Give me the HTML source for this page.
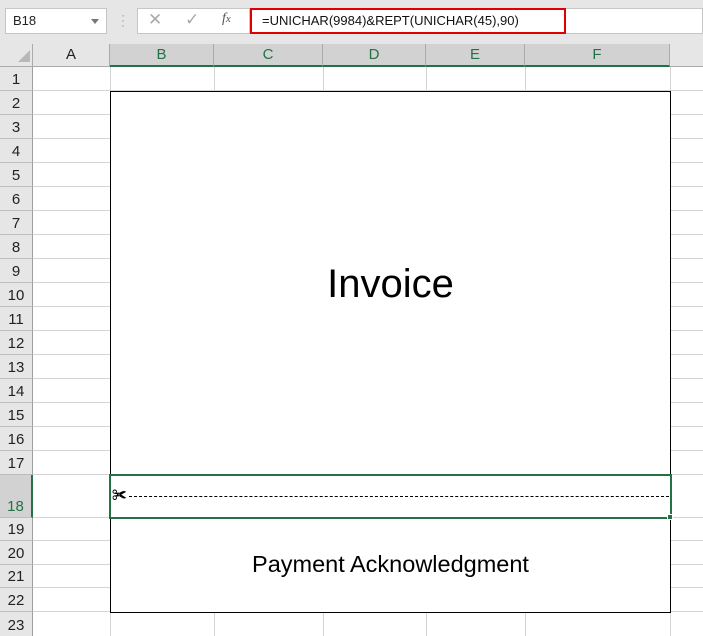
<!DOCTYPE html>
<html><head><meta charset="utf-8"><style>
*{margin:0;padding:0;box-sizing:border-box}
body{width:703px;height:636px;overflow:hidden;background:#fff;font-family:"Liberation Sans",sans-serif;position:relative}
.a{position:absolute}
.rh{position:absolute;left:0;width:33px;background:#e6e6e6;border-bottom:1px solid #bdbdbd;border-right:1px solid #9f9f9f;font-size:15px;color:#222;text-align:center;display:flex;align-items:flex-end;justify-content:center;padding-bottom:2px}
.ch{position:absolute;top:44px;height:23px;background:#d2d2d2;border-right:1px solid #ababab;font-size:15px;color:#217346;text-align:center;line-height:22px;border-bottom:2px solid #217346}
.hl{position:absolute;left:33px;right:0;height:1px;background:#d4d4d4}
.vl{position:absolute;top:67px;bottom:0;width:1px;background:#d4d4d4}
</style></head><body>
<div class="a" style="left:0;top:0;width:703px;height:44px;background:#e6e6e6"></div>
<div class="a" style="left:5px;top:8px;width:102px;height:26px;background:#fff;border:1px solid #c6c6c6;font-size:13px;line-height:24px;padding-left:7px;color:#222">B18</div>
<div class="a" style="left:91px;top:19px;width:0;height:0;border-left:4px solid transparent;border-right:4px solid transparent;border-top:5px solid #777"></div>
<div class="a" style="left:121px;top:13px;color:#999;font-size:12px;line-height:5px">·<br>·<br>·</div>
<div class="a" style="left:137px;top:8px;width:113px;height:26px;background:#fff;border:1px solid #c6c6c6"></div>
<div class="a" style="left:148px;top:10px;color:#aaa;font-size:17px">✕</div>
<div class="a" style="left:185px;top:10px;color:#aaa;font-size:17px">✓</div>
<div class="a" style="left:222px;top:11px;color:#555;font-size:14px;font-style:italic;font-family:'Liberation Serif',serif">f<span style="font-size:11px">x</span></div>
<div class="a" style="left:250px;top:8px;width:453px;height:26px;background:#fff;border:1px solid #c6c6c6"></div>
<div class="a" style="left:250px;top:8px;width:316px;height:26px;border:2px solid #e00000;font-size:13px;line-height:22px;padding-left:10px;color:#111">=UNICHAR(9984)&amp;REPT(UNICHAR(45),90)</div>
<div class="a" style="left:0;top:44px;width:33px;height:23px;background:#e6e6e6;border-right:1px solid #ababab;border-bottom:1px solid #ababab"></div>
<div class="a" style="left:18px;top:50px;width:0;height:0;border-left:12px solid transparent;border-bottom:12px solid #b8b8b8"></div>
<div class="a" style="left:33px;top:44px;width:77px;height:23px;background:#e6e6e6;border-right:1px solid #ababab;border-bottom:1px solid #ababab;font-size:15px;text-align:center;line-height:22px;color:#222">A</div>
<div class="ch" style="left:110px;width:104px">B</div>
<div class="ch" style="left:214px;width:109px">C</div>
<div class="ch" style="left:323px;width:103px">D</div>
<div class="ch" style="left:426px;width:99px">E</div>
<div class="ch" style="left:525px;width:145px">F</div>
<div class="a" style="left:670px;top:44px;width:33px;height:23px;background:#e6e6e6;border-bottom:1px solid #ababab"></div>
<div class="vl" style="left:110px"></div><div class="vl" style="left:214px"></div><div class="vl" style="left:323px"></div><div class="vl" style="left:426px"></div><div class="vl" style="left:525px"></div><div class="vl" style="left:670px"></div>
<div class="hl" style="top:90px"></div><div class="hl" style="top:114px"></div><div class="hl" style="top:138px"></div><div class="hl" style="top:162px"></div><div class="hl" style="top:186px"></div><div class="hl" style="top:210px"></div><div class="hl" style="top:234px"></div><div class="hl" style="top:258px"></div><div class="hl" style="top:282px"></div><div class="hl" style="top:306px"></div><div class="hl" style="top:330px"></div><div class="hl" style="top:354px"></div><div class="hl" style="top:378px"></div><div class="hl" style="top:402px"></div><div class="hl" style="top:426px"></div><div class="hl" style="top:450px"></div><div class="hl" style="top:474px"></div><div class="hl" style="top:517px"></div><div class="hl" style="top:540px"></div><div class="hl" style="top:564px"></div><div class="hl" style="top:587px"></div><div class="hl" style="top:611px"></div>
<div class="rh" style="top:67px;height:24px">1</div>
<div class="rh" style="top:91px;height:24px">2</div>
<div class="rh" style="top:115px;height:24px">3</div>
<div class="rh" style="top:139px;height:24px">4</div>
<div class="rh" style="top:163px;height:24px">5</div>
<div class="rh" style="top:187px;height:24px">6</div>
<div class="rh" style="top:211px;height:24px">7</div>
<div class="rh" style="top:235px;height:24px">8</div>
<div class="rh" style="top:259px;height:24px">9</div>
<div class="rh" style="top:283px;height:24px">10</div>
<div class="rh" style="top:307px;height:24px">11</div>
<div class="rh" style="top:331px;height:24px">12</div>
<div class="rh" style="top:355px;height:24px">13</div>
<div class="rh" style="top:379px;height:24px">14</div>
<div class="rh" style="top:403px;height:24px">15</div>
<div class="rh" style="top:427px;height:24px">16</div>
<div class="rh" style="top:451px;height:24px">17</div>
<div class="rh" style="top:475px;height:43px;background:#d2d2d2;color:#217346;border-right:2px solid #217346">18</div>
<div class="rh" style="top:518px;height:23px">19</div>
<div class="rh" style="top:541px;height:24px">20</div>
<div class="rh" style="top:565px;height:23px">21</div>
<div class="rh" style="top:588px;height:24px">22</div>
<div class="rh" style="top:612px;height:24px;border-bottom:none">23</div>
<div class="a" style="left:110px;top:91px;width:561px;height:522px;border:1px solid #000;background:#fff"></div>
<div class="a" style="left:110px;top:262px;width:561px;text-align:center;font-size:40px;color:#000">Invoice</div>
<div class="a" style="left:110px;top:551px;width:561px;text-align:center;font-size:23.5px;color:#000">Payment Acknowledgment</div>
<div class="a" style="left:109px;top:474px;width:563px;height:45px;border:2px solid #217346"></div>
<div class="a" style="left:667px;top:514px;width:6px;height:6px;background:#217346;border:1px solid #fff"></div>
<div class="a" style="left:112px;top:486px;font-size:15px;color:#000;font-family:'DejaVu Sans',sans-serif">✀</div>
<div class="a" style="left:129px;top:496px;width:540px;height:0;border-top:1px dashed #000"></div>
</body></html>
